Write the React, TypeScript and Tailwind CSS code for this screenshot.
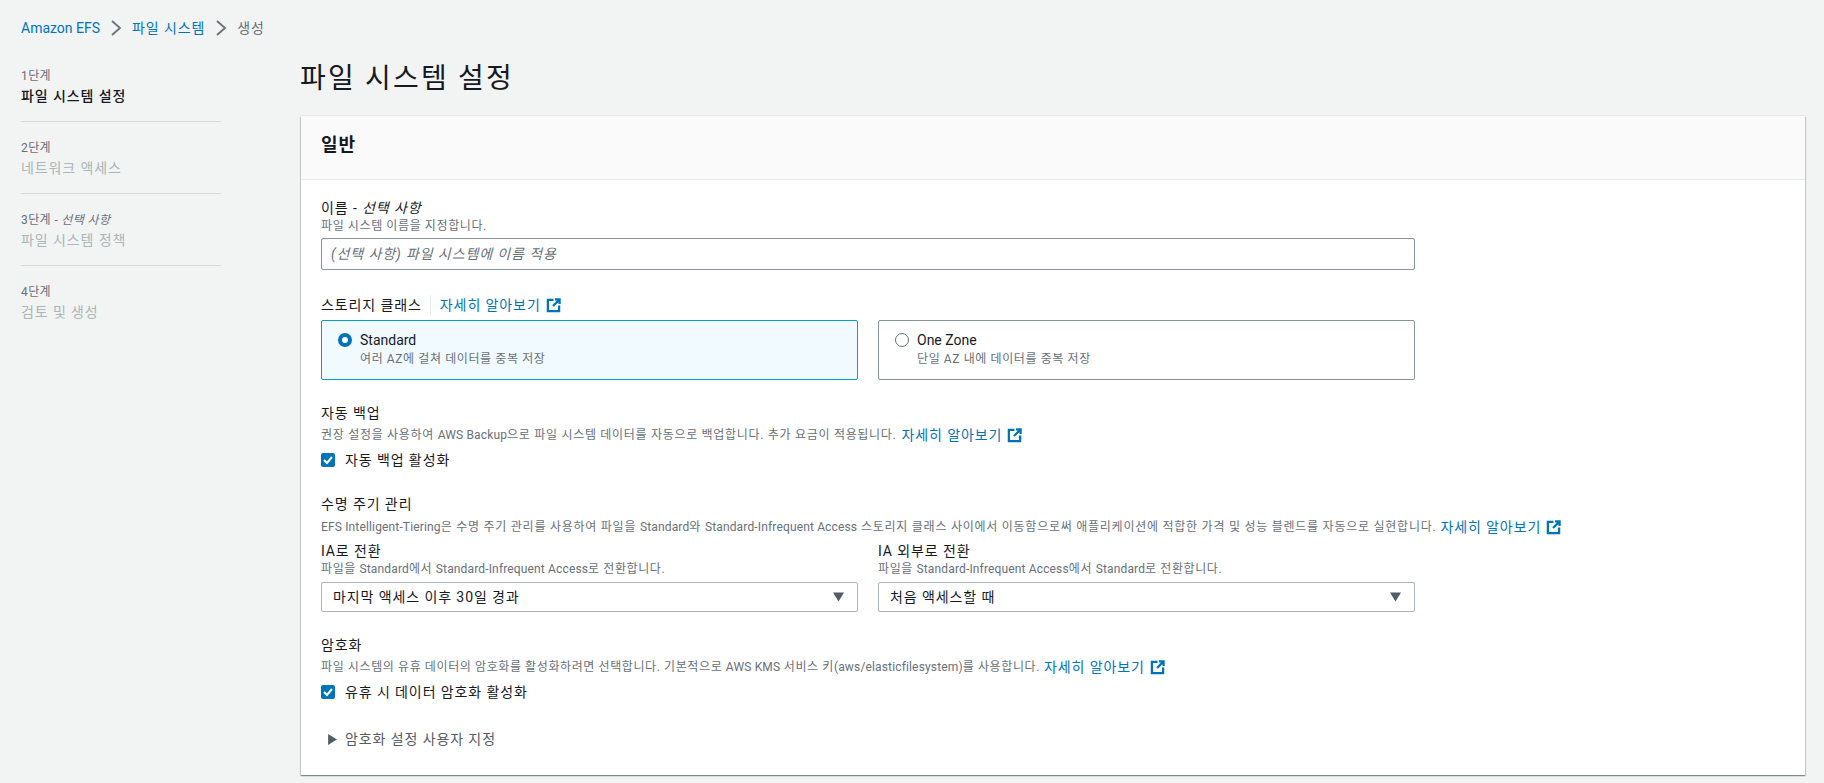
const KR = 'font-["Roboto","Noto_Sans_CJK_KR",sans-serif]'

// latin in the reference font runs narrower than hangul, so it gets less tracking
function L({ children }: { children: string }) {
    return <span className="tracking-[0.15px]">{children}</span>
}

function ExternalIcon() {
    return (
        <svg viewBox="0 0 16 16" className="ml-[5px] inline-block h-[15px] w-[15px] shrink-0 text-[#0073bb]" fill="none" stroke="currentColor">
            <path d="M8 2H2v12h12V8" strokeWidth="2.4" />
            <path d="M7.5 8.5L14 2M9.5 1.5H14.5V6.5" strokeWidth="2.4" />
        </svg>
    )
}

function LearnMore() {
    return (
        <a className="inline-flex items-center text-sm leading-5 tracking-[0.9px] text-[#0073bb]">
            자세히 알아보기
            <ExternalIcon />
        </a>
    )
}

function Chevron() {
    return (
        <svg viewBox="0 0 12 16" className="mx-[10px] h-4 w-3 text-[#687078]" fill="none" stroke="currentColor" strokeWidth="1.8">
            <path d="M2 1l8 7-8 7" />
        </svg>
    )
}

function Step({ label, italic, title, active, last }: { label: string; italic?: string; title: string; active?: boolean; last?: boolean }) {
    return (
        <div className={last ? 'h-[72px] pt-[16px]' : 'h-[72px] border-b border-[#d5dbdb] pt-[16px]'}>
            <div className="text-xs leading-5 tracking-[0.4px] text-[#687078]">
                {label}
                {italic && <i> - {italic}</i>}
            </div>
            <div className={active ? 'text-sm leading-5 tracking-[0.9px] font-medium text-[#16191f]' : 'text-sm leading-5 tracking-[0.9px] text-[#aab7b8]'}>{title}</div>
        </div>
    )
}

function Checkbox({ label }: { label: string }) {
    return (
        <div className="flex h-5 items-center">
            <span className="flex h-[14px] w-[14px] items-center justify-center rounded-[2px] bg-[#0073bb]">
                <svg viewBox="0 0 14 14" className="h-[14px] w-[14px]" fill="none" stroke="#fff" strokeWidth="2">
                    <path d="M3 7l3 3 5-6" />
                </svg>
            </span>
            <span className="ml-[10px] text-sm leading-5 tracking-[0.9px] text-[#16191f]">{label}</span>
        </div>
    )
}

function SelectBox({ value }: { value: string }) {
    return (
        <div className="flex h-[30px] items-center justify-between rounded-[2px] border border-[#aab7b8] bg-white pl-[11px] pr-[13px]">
            <span className="text-sm tracking-[0.9px] text-[#16191f]">{value}</span>
            <svg viewBox="0 0 12 10" className="h-[10px] w-[11px] text-[#545b64]" fill="currentColor">
                <path d="M0 0h12L6 10z" />
            </svg>
        </div>
    )
}

function RadioCard({ title, desc, selected }: { title: string; desc: string; selected?: boolean }) {
    return (
        <div className={selected ? 'flex h-[60px] rounded-[2px] border border-[#00a1c9] bg-[#f1faff] pl-4 pt-[10px]' : 'flex h-[60px] rounded-[2px] border border-[#879596] bg-white pl-4 pt-[10px]'}>
            {selected ? (
                <span className="mt-[2px] h-[14px] w-[14px] rounded-full border-[4px] border-[#0073bb] bg-white" />
            ) : (
                <span className="mt-[2px] h-[14px] w-[14px] rounded-full border border-[#687078] bg-white" />
            )}
            <div className="ml-[8px]">
                <div className="text-sm leading-[18px] text-[#16191f]">{title}</div>
                <div className="mt-[2px] text-xs leading-4 tracking-[0.6px] text-[#687078]">{desc}</div>
            </div>
        </div>
    )
}

export default function App() {
    return (
        <div className={`${KR} flex h-[783px] flex-col overflow-hidden bg-[#f2f3f3]`}>
            <div className="flex h-[50px] items-center pl-[21px] pt-[6px] pb-0 text-sm tracking-[0.9px]">
                <a className="tracking-normal text-[#0073bb]">Amazon EFS</a>
                <Chevron />
                <a className="text-[#0073bb]">파일 시스템</a>
                <Chevron />
                <span className="text-[#687078]">생성</span>
            </div>
            <div className="flex">
                <aside className="w-[300px] shrink-0 pl-[21px]">
                    <div className="w-[200px]">
                        <Step label="1단계" title="파일 시스템 설정" active />
                        <Step label="2단계" title="네트워크 액세스" />
                        <Step label="3단계" italic="선택 사항" title="파일 시스템 정책" />
                        <Step label="4단계" title="검토 및 생성" last />
                    </div>
                </aside>
                <main className="w-[1505px]">
                    <h1 className="h-[66px] pt-[8px] text-[28px] leading-[42px] font-normal tracking-[2.2px] text-[#16191f]">파일 시스템 설정</h1>
                    <section className="ml-px h-[659px] bg-white shadow-[0_1px_1px_0_rgba(0,28,36,0.3),1px_1px_1px_0_rgba(0,28,36,0.15),-1px_1px_1px_0_rgba(0,28,36,0.15),0_-1px_0_0_#e6e9e9]">
                        <div className="h-[64px] border-b border-[#eaeded] bg-[#fafafa] pl-5 pt-[15px]">
                            <h2 className="text-lg leading-[28px] font-bold tracking-[0.9px] text-[#16191f]">일반</h2>
                        </div>
                        <div className="w-[1134px] px-5 pt-[18px]">
                            <div className="text-sm leading-5 tracking-[0.9px] text-[#16191f]">
                                이름 - <i>선택 사항</i>
                            </div>
                            <div className="text-xs leading-4 tracking-[0.6px] text-[#687078]">파일 시스템 이름을 지정합니다.</div>
                            <div className="mt-[4px] flex h-8 items-center rounded-[2px] border border-[#879596] bg-white pl-[9px] text-sm tracking-[0.9px] text-[#687078] italic">
                                (선택 사항) 파일 시스템에 이름 적용
                            </div>

                            <div className="mt-[25px] flex h-5 items-center text-sm tracking-[0.9px] text-[#16191f]">
                                <span className="border-r border-[#eaeded] pr-[8px]">스토리지 클래스</span>
                                <span className="ml-[9px] flex"><LearnMore /></span>
                            </div>
                            <div className="mt-[5px] grid grid-cols-2 gap-5">
                                <RadioCard title="Standard" desc="여러 AZ에 걸쳐 데이터를 중복 저장" selected />
                                <RadioCard title="One Zone" desc="단일 AZ 내에 데이터를 중복 저장" />
                            </div>

                            <div className="mt-[23px] text-sm leading-5 tracking-[0.9px] text-[#16191f]">자동 백업</div>
                            <div className="mt-[2px] flex h-5 items-center whitespace-nowrap text-xs tracking-[0.7px] text-[#687078]">
                                <span className="mr-[5px]">권장 설정을 사용하여 <L>AWS Backup</L>으로 파일 시스템 데이터를 자동으로 백업합니다. 추가 요금이 적용됩니다.</span>
                                <LearnMore />
                            </div>
                            <div className="mt-[5px]"><Checkbox label="자동 백업 활성화" /></div>

                            <div className="mt-[24px] text-sm leading-5 tracking-[0.9px] text-[#16191f]">수명 주기 관리</div>
                            <div className="mt-[3px] flex h-5 items-center whitespace-nowrap text-xs tracking-[0.75px] text-[#687078]">
                                <span className="mr-[4px]"><L>EFS Intelligent-Tiering</L>은 수명 주기 관리를 사용하여 파일을 <L>Standard</L>와 <L>Standard-Infrequent Access</L> 스토리지 클래스 사이에서 이동함으로써 애플리케이션에 적합한 가격 및 성능 블렌드를 자동으로 실현합니다.</span>
                                <LearnMore />
                            </div>
                            <div className="mt-[5px] grid grid-cols-2 gap-5">
                                <div>
                                    <div className="text-sm leading-[18px] tracking-[0.9px] text-[#16191f]">IA로 전환</div>
                                    <div className="text-xs leading-[18px] tracking-[0.6px] text-[#687078]">파일을 <L>Standard</L>에서 <L>Standard-Infrequent Access</L>로 전환합니다.</div>
                                    <div className="mt-[4px]"><SelectBox value="마지막 액세스 이후 30일 경과" /></div>
                                </div>
                                <div>
                                    <div className="text-sm leading-[18px] tracking-[0.9px] text-[#16191f]">IA 외부로 전환</div>
                                    <div className="text-xs leading-[18px] tracking-[0.6px] text-[#687078]">파일을 <L>Standard-Infrequent Access</L>에서 <L>Standard</L>로 전환합니다.</div>
                                    <div className="mt-[4px]"><SelectBox value="처음 액세스할 때" /></div>
                                </div>
                            </div>

                            <div className="mt-[23px] text-sm leading-5 tracking-[0.9px] text-[#16191f]">암호화</div>
                            <div className="mt-[2px] flex h-5 items-center whitespace-nowrap text-xs tracking-[0.6px] text-[#687078]">
                                <span className="mr-[4px]">파일 시스템의 유휴 데이터의 암호화를 활성화하려면 선택합니다. 기본적으로 <L>AWS KMS</L> 서비스 키<L>(aws/elasticfilesystem)</L>를 사용합니다.</span>
                                <LearnMore />
                            </div>
                            <div className="mt-[5px]"><Checkbox label="유휴 시 데이터 암호화 활성화" /></div>

                            <div className="mt-[27px] flex h-5 items-center pl-[7px] text-sm tracking-[0.9px] text-[#545b64]">
                                <svg viewBox="0 0 8 10" className="h-[11px] w-[9px] text-[#545b64]" fill="currentColor">
                                    <path d="M0 0l8 5-8 5z" />
                                </svg>
                                <span className="ml-[8px]">암호화 설정 사용자 지정</span>
                            </div>
                        </div>
                    </section>
                </main>
            </div>
        </div>
    )
}
